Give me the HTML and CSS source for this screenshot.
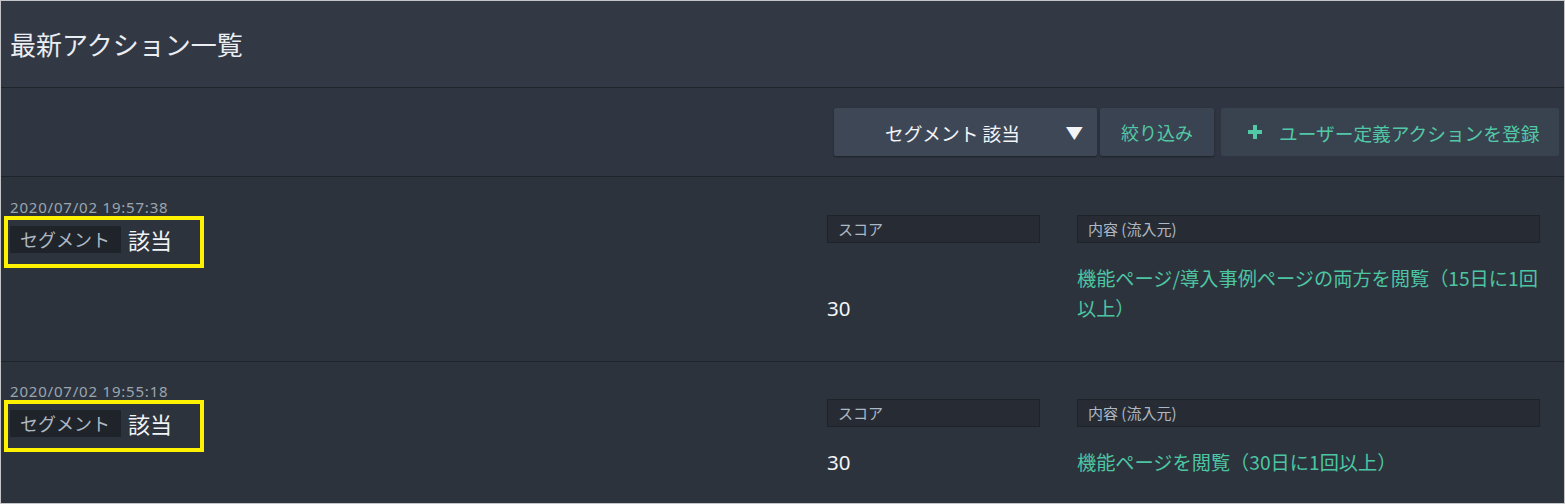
FILE: index.html
```html
<!DOCTYPE html>
<html lang="ja">
<head>
<meta charset="utf-8">
<title>最新アクション一覧</title>
<link rel="stylesheet" href="styles.css">
</head>
<body>
<div class="panel">
  <header class="panel-header">
    <h1 class="title">最新アクション一覧</h1>
  </header>
  <div class="toolbar">
    <button class="btn btn-select"><span class="select-label">セグメント 該当</span><span class="caret">▼</span></button>
    <button class="btn btn-filter">絞り込み</button>
    <button class="btn btn-add"><svg class="plus" viewBox="0 0 14 14" width="14" height="14"><path d="M5 0h4v5h5v4H9v5H5V9H0V5h5z" fill="currentColor"/></svg><span>ユーザー定義アクションを登録</span></button>
  </div>
  <div class="rows">
    <div class="row">
      <div class="row-main">
        <div class="time">2020/07/02 19:57:38</div>
        <div class="hl"><span class="tag">セグメント</span><span class="tag-value">該当</span></div>
      </div>
      <div class="cell">
        <div class="cell-label">スコア</div>
        <div class="cell-value score">30</div>
      </div>
      <div class="cell">
        <div class="cell-label">内容 (流入元)</div>
        <div class="cell-value content">機能ページ/導入事例ページの両方を閲覧（15日に1回以上）</div>
      </div>
    </div>
    <div class="row">
      <div class="row-main">
        <div class="time">2020/07/02 19:55:18</div>
        <div class="hl"><span class="tag">セグメント</span><span class="tag-value">該当</span></div>
      </div>
      <div class="cell">
        <div class="cell-label">スコア</div>
        <div class="cell-value score">30</div>
      </div>
      <div class="cell">
        <div class="cell-label">内容 (流入元)</div>
        <div class="cell-value content">機能ページを閲覧（30日に1回以上）</div>
      </div>
    </div>
  </div>
</div>
</body>
</html>
```
FILE: styles.css
```css
* { box-sizing: border-box; }
html, body { margin: 0; padding: 0; }
body {
  background: #2d333d;
  font-family: "Noto Sans", "Noto Sans CJK JP", sans-serif;
}
.panel {
  width: 1565px;
  height: 504px;
  border: 1px solid #c3c5c8;
  background: #2d333d;
  overflow: hidden;
}
.panel-header {
  height: 87px;
  background: #323844;
  border-bottom: 1px solid #1f232a;
  display: flex;
  align-items: center;
  padding-left: 9px;
}
.title {
  margin: 0;
  margin-bottom: 2px;
  font-weight: 400;
  font-size: 26px;
  color: #eaedf1;
  font-family: "Noto Sans CJK JP", sans-serif;
}
.toolbar {
  height: 89px;
  background: #303641;
  border-bottom: 1px solid #1f232a;
  display: flex;
  justify-content: flex-end;
  align-items: flex-start;
  padding: 20px 5px 0 0;
}
.btn {
  height: 48px;
  border: none;
  border-radius: 2px;
  font-family: "Noto Sans CJK JP", sans-serif;
  font-size: 18.7px;
  display: flex;
  align-items: center;
  padding: 0;
  cursor: pointer;
}
.btn-select {
  width: 263px;
  background: #3e4756;
  color: #f2f4f6;
  box-shadow: 0 1px 2px rgba(0,0,0,0.45);
}
.select-label {
  flex: 1;
  text-align: center;
  padding-left: 4px;
}
.caret {
  font-size: 16px;
  padding-right: 14px;
  transform: scaleX(1.1);
}
.btn-filter {
  width: 114px;
  margin-left: 3px;
  background: #3a4351;
  color: #52c9a6;
  font-size: 18px;
  justify-content: center;
  box-shadow: 0 1px 2px rgba(0,0,0,0.45);
}
.btn-add {
  width: 338px;
  margin-left: 7px;
  background: #39424f;
  color: #52c9a6;
  padding-left: 27px;
  gap: 17px;
}
.plus { flex: none; }
.row {
  display: grid;
  grid-template-columns: 780px 213px 463px;
  column-gap: 37px;
  padding: 0 24px 38px 9px;
  border-bottom: 1px solid #1f232a;
}
.row + .row { padding-top: 0; }
.row-main { padding-top: 21px; }
.row + .row .row-main { padding-top: 20px; }
.row + .row .cell { padding-top: 37px; }
.time {
  font-size: 15px;
  line-height: 18px;
  letter-spacing: 0.8px;
  color: #9ba5b1;
}
.hl {
  display: flex;
  align-items: flex-start;
  width: 200px;
  height: 52px;
  margin-left: -6px;
  border: 4px solid #fff200;
  padding: 6px 0 0 2px;
  font-family: "Noto Sans CJK JP", sans-serif;
}
.tag {
  background: #1f242b;
  color: #aeb7c3;
  font-size: 18px;
  line-height: 27px;
  height: 27px;
  padding: 0 11px 0 10px;
}
.tag-value {
  margin-left: 7px;
  color: #f1f3f5;
  font-size: 22px;
  line-height: 27px;
}
.cell {
  display: flex;
  flex-direction: column;
  padding-top: 38px;
}
.cell-label {
  height: 28px;
  background: #272c34;
  border: 1px solid #1e2229;
  color: #aeb8c4;
  font-size: 15px;
  line-height: 26px;
  padding-left: 10px;
  font-family: "Noto Sans CJK JP", sans-serif;
}
.cell-value {
  margin-top: 20px;
  flex: 1;
  display: flex;
  align-items: flex-end;
  font-size: 19.2px;
  line-height: 30px;
  font-family: "Noto Sans CJK JP", sans-serif;
}
.score {
  color: #f3f5f7;
  font-size: 20.5px;
  font-family: "Noto Sans", sans-serif;
}
.content {
  color: #4cc6a2;
}
```
